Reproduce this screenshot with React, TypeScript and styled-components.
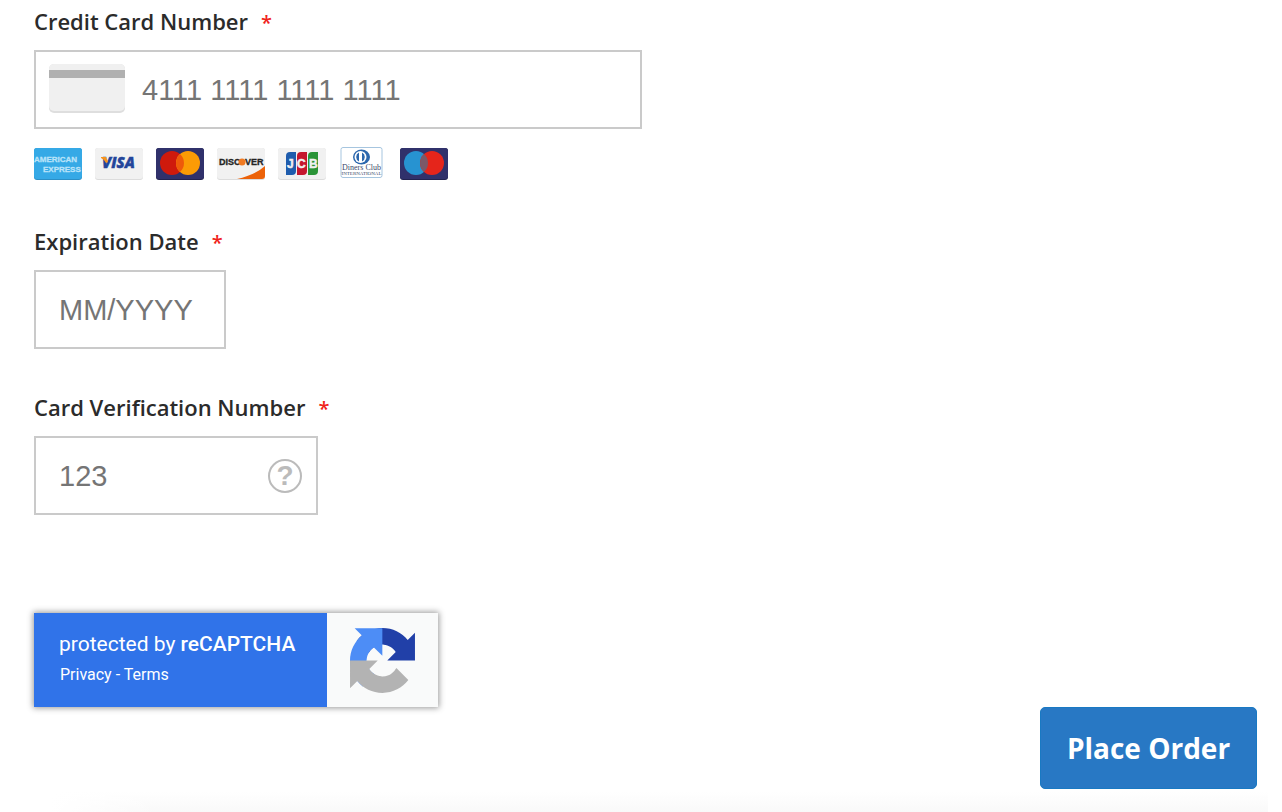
import React from 'react';
import styled, { createGlobalStyle } from 'styled-components';

const GlobalStyle = createGlobalStyle`
  * { box-sizing: border-box; }
  body { margin: 0; background: #fff; }
`;

const Page = styled.main`
  min-height: 100vh;
  padding: 3px 25px 23px 34px;
  display: flex;
  flex-direction: column;
  color: #2b2b2b;
  font-family: 'Open Sans', sans-serif;
  background:
    linear-gradient(to right, #fff, transparent) 50px 100% / 110px 20px no-repeat,
    linear-gradient(to top, #f9f9f9, #fff) 52px 100% / calc(100% - 66px) 20px no-repeat;
`;

const Form = styled.form`
  flex: 1;
  display: flex;
  flex-direction: column;
`;

const Field = styled.div`
  display: flex;
  flex-direction: column;
  align-items: flex-start;
  margin-bottom: 40px;
`;

const Label = styled.label`
  margin-bottom: 11px;
  font-size: 22px;
  font-weight: 600;
  line-height: 36px;

  &::after {
    content: '*';
    margin-left: 13px;
    color: #f0231c;
    font-size: 20px;
    line-height: 20px;
  }
`;

const InputBox = styled.div<{ $width: number }>`
  width: 100%;
  max-width: ${(p) => p.$width}px;
  height: 79px;
  display: flex;
  align-items: center;
  gap: 17px;
  padding: 0 14px 0 13px;
  border: 2px solid #cacaca;
  background: #fff;
`;

const Input = styled.input<{ $inset?: boolean }>`
  flex: 1;
  min-width: 0;
  padding: 0 0 0 ${(p) => (p.$inset ? 10 : 0)}px;
  border: 0;
  outline: 0;
  background: transparent;
  color: #2b2b2b;
  font-family: 'Liberation Sans', Arial, sans-serif;
  font-size: 29px;
  line-height: 40px;

  &::placeholder { color: #757575; opacity: 1; }
`;

const CardGlyph = styled.svg`
  flex: none;
  width: 76px;
  height: 51px;
`;

const CardList = styled.ul`
  display: flex;
  gap: 13px;
  margin: 18px 0 0;
  padding: 0 0 3px;
  list-style: none;
`;

const CardLogo = styled.svg`
  display: block;
  width: 48px;
  height: 33px;
`;

const HelpButton = styled.button`
  flex: none;
  width: 34px;
  height: 34px;
  padding: 0;
  border: 2px solid #bbb;
  border-radius: 50%;
  background: none;
  color: #bbb;
  font: 700 28px/30px 'Liberation Sans', Arial, sans-serif;
`;

const Recaptcha = styled.aside`
  width: 100%;
  max-width: 404px;
  min-height: 94px;
  margin-top: 58px;
  display: flex;
  background: #f9fafa;
  box-shadow: 0 0 6px 1px #999;
  font-family: Roboto, sans-serif;
`;

const RecaptchaText = styled.div`
  flex: 1;
  padding: 16px 0 0 25px;
  background: #3073e9;
  color: #fff;
  font-size: 21px;
  line-height: 30px;
`;

const RecaptchaTitle = styled.div`
  strong { font-weight: 500; }
`;

const RecaptchaLinks = styled.div`
  padding-left: 1px;
  font-size: 16px;
  line-height: 32px;

  a { color: inherit; text-decoration: none; }
`;

const RecaptchaMark = styled.div`
  flex: none;
  width: 111px;
  display: flex;
  align-items: center;
  justify-content: center;

  svg { width: 65px; height: 65px; }
`;

const Submit = styled.button`
  align-self: flex-end;
  min-width: 217px;
  height: 82px;
  padding: 0 24px;
  border: 1px solid #1979c3;
  border-radius: 5px;
  background: #2878c4;
  color: #fff;
  font: 700 28px/36px 'Open Sans', sans-serif;
`;

type LogoProps = { name: string; fill: string; edge: string; children: React.ReactNode };

function Logo({ name, fill, edge, children }: LogoProps) {
  return (
    <li>
      <CardLogo viewBox="0 0 48 33" role="img" aria-label={name}>
        <rect width="48" height="32" y="1" rx="3" fill={edge} />
        <rect width="48" height="31" y="1" rx="3" fill={fill} />
        {children}
      </CardLogo>
    </li>
  );
}

const sans = "'Liberation Sans', Arial, sans-serif";

function CardLogos() {
  return (
    <CardList>
      <Logo name="American Express" fill="#35a9e6" edge="#2b8fc6">
        <g fill="#b9e3f9" stroke="#b9e3f9" strokeWidth=".3" fontFamily={sans} fontWeight="700" fontSize="8">
          <text x="0" y="15">AMERICAN</text>
          <text x="9" y="25">EXPRESS</text>
        </g>
      </Logo>
      <Logo name="Visa" fill="#f1f1f1" edge="#dcdcdc">
        <text x="7" y="21" fill="#23459a" stroke="#23459a" strokeWidth=".4" fontFamily="'Open Sans', sans-serif" fontWeight="800" fontStyle="italic" fontSize="15">VISA</text>
        <path d="M6 10h5l2 5-2 1Q9 12 6 11z" fill="#f7941d" />
      </Logo>
      <Logo name="Mastercard" fill="#30316b" edge="#22234f">
        <circle cx="16" cy="16" r="12" fill="#cf1a0c" />
        <circle cx="32" cy="16" r="12" fill="#fb9b05" />
        <path d="M24 7.060a12 12 0 0 1 0 17.880a12 12 0 0 1 0-17.880" fill="#ee5a0a" />
      </Logo>
      <Logo name="Discover" fill="#f1f1f1" edge="#dcdcdc">
        <path d="M48 19v10q0 3-3 3H20Q38 28 48 19" fill="#ec6209" />
        <g fill="#242424" stroke="#242424" strokeWidth=".3" fontFamily={sans} fontWeight="700" fontSize="9">
          <text x="2" y="18">DISC</text>
          <text x="28" y="18">VER</text>
        </g>
        <circle cx="25" cy="15" r="3.500" fill="#f07a22" />
      </Logo>
      <Logo name="JCB" fill="#f1f1f1" edge="#dcdcdc">
        <path d="M12 5h6v19q0 4-4 4H8V9q0-4 4-4" fill="#1f5cad" />
        <path d="M23 5h6v19q0 4-4 4h-6V9q0-4 4-4" fill="#c5172e" />
        <path d="M34 5h6v19q0 4-4 4h-6V9q0-4 4-4" fill="#2a9437" />
        <g fill="#f1f1f1" stroke="#f1f1f1" strokeWidth=".5" fontFamily={sans} fontWeight="700" fontSize="12">
          <text x="9" y="21">J</text>
          <text x="19" y="21">C</text>
          <text x="31" y="21">B</text>
        </g>
      </Logo>
      <li>
        <CardLogo viewBox="0 0 48 33" role="img" aria-label="Diners Club International">
          <rect x="2" y="0.500" width="41" height="30" rx="2" fill="#fff" stroke="#a6c5df" />
          <ellipse cx="22.500" cy="10" rx="8.500" ry="7.500" fill="#2c67ad" />
          <circle cx="21.500" cy="10" r="6" fill="#fff" />
          <path d="M20 5.500v9a5 5 0 0 1 0-9M23 5.500v9a5 5 0 0 0 0-9" fill="#2c67ad" />
          <g fill="#3b4a6b" fontFamily="'Liberation Serif', serif" textAnchor="middle">
            <text x="22.500" y="23" fontSize="8">Diners Club</text>
            <text x="22.500" y="28" fontSize="5">INTERNATIONAL</text>
          </g>
        </CardLogo>
      </li>
      <Logo name="Maestro" fill="#30316b" edge="#22234f">
        <circle cx="16" cy="16" r="12" fill="#2793d1" />
        <circle cx="32" cy="16" r="12" fill="#e5251b" />
        <path d="M24 7.060a12 12 0 0 1 0 17.880a12 12 0 0 1 0-17.880" fill="#7b5868" />
      </Logo>
    </CardList>
  );
}

export default function App() {
  return (
    <>
      <GlobalStyle />
      <Page>
        <Form id="payment" onSubmit={(e) => e.preventDefault()}>
          <Field>
            <Label htmlFor="number">Credit Card Number</Label>
            <InputBox $width={608}>
              <CardGlyph viewBox="0 0 76 51" aria-hidden="true">
                <rect width="76" height="49" rx="5" fill="#dedede" />
                <rect width="76" height="47" rx="5" fill="#f0f0f0" />
                <rect y="6" width="76" height="8" fill="#b0b0b0" />
              </CardGlyph>
              <Input id="number" placeholder="4111 1111 1111 1111" />
            </InputBox>
            <CardLogos />
          </Field>
          <Field>
            <Label htmlFor="expiry">Expiration Date</Label>
            <InputBox $width={192}>
              <Input id="expiry" $inset placeholder="MM/YYYY" />
            </InputBox>
          </Field>
          <Field>
            <Label htmlFor="cvv">Card Verification Number</Label>
            <InputBox $width={284}>
              <Input id="cvv" $inset placeholder="123" />
              <HelpButton type="button" aria-label="What is this?">?</HelpButton>
            </InputBox>
          </Field>
          <Recaptcha>
            <RecaptchaText>
              <RecaptchaTitle>protected by <strong>reCAPTCHA</strong></RecaptchaTitle>
              <RecaptchaLinks><a href="#privacy">Privacy</a> - <a href="#terms">Terms</a></RecaptchaLinks>
            </RecaptchaText>
            <RecaptchaMark>
              <svg viewBox="0 0 64 64" aria-hidden="true">
                <path fill="#2140a8" d="M64 31.955l-.033-1.37V4.687l-7.16 7.16C50.948 4.674 42.033.093 32.05.093c-10.4 0-19.622 4.96-25.458 12.64l11.736 11.86a15.55 15.55 0 0 1 4.754-5.334c2.05-1.6 4.952-2.906 8.968-2.906.485 0 .86.057 1.135.163 4.976.393 9.288 3.14 11.828 7.124l-8.307 8.307L64 31.953" />
                <path fill="#4d8df6" d="M31.862.094l-1.37.033H4.594l7.16 7.16C4.58 13.147 0 22.06 0 32.046c0 10.4 4.96 19.622 12.64 25.458L24.5 45.768a15.55 15.55 0 0 1-5.334-4.754c-1.6-2.05-2.906-4.952-2.906-8.968 0-.485.057-.86.163-1.135.393-4.976 3.14-9.288 7.124-11.828l8.307 8.307L31.86.095" />
                <path fill="#b3b3b3" d="M.001 32.045l.033 1.37v25.898l7.16-7.16c5.86 7.173 14.774 11.754 24.76 11.754 10.4 0 19.622-4.96 25.458-12.64l-11.736-11.86a15.55 15.55 0 0 1-4.754 5.334c-2.05 1.6-4.952 2.906-8.968 2.906-.485 0-.86-.057-1.135-.163-4.976-.393-9.288-3.14-11.828-7.124l8.307-8.307c-10.522.04-22.4.066-27.295-.005" />
              </svg>
            </RecaptchaMark>
          </Recaptcha>
        </Form>
        <Submit type="submit" form="payment">Place Order</Submit>
      </Page>
    </>
  );
}
